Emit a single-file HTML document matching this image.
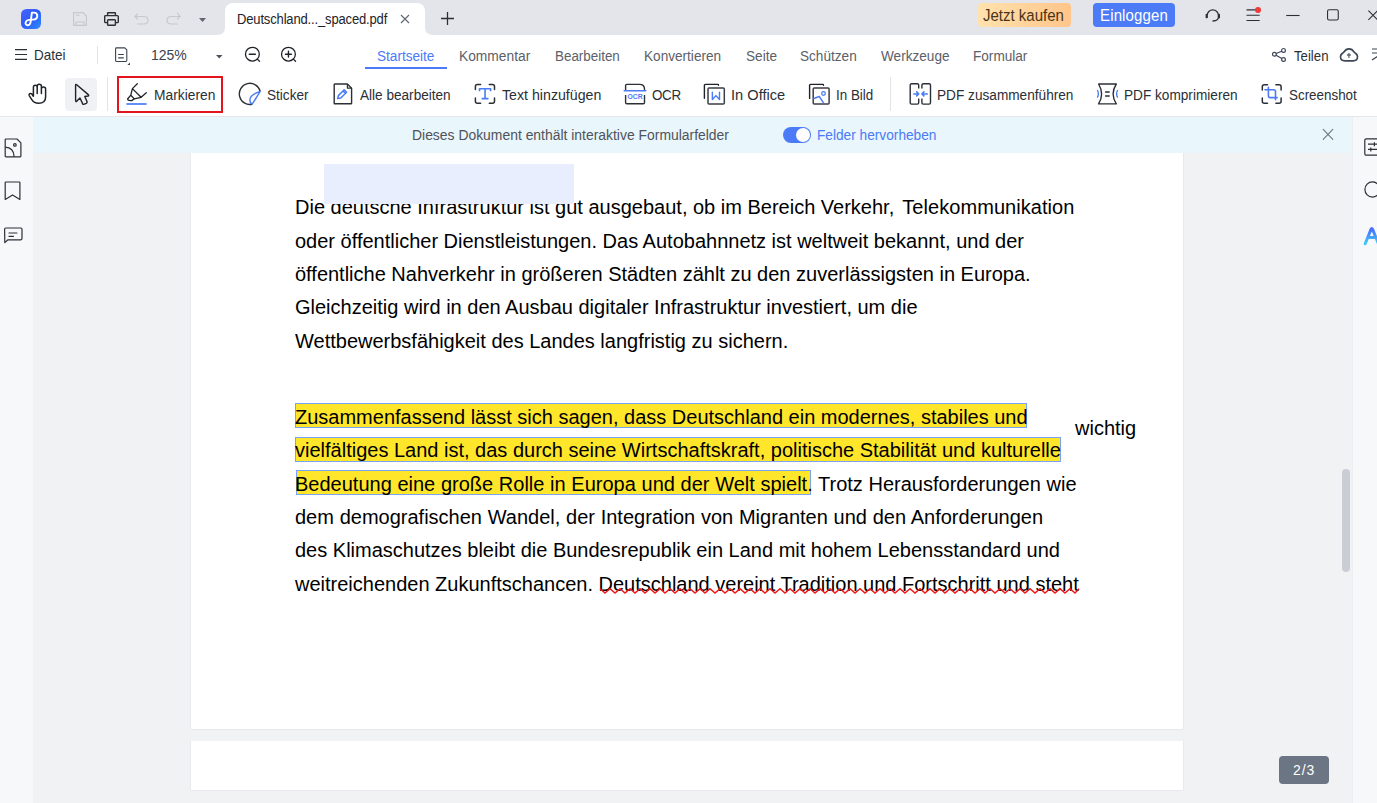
<!DOCTYPE html>
<html><head><meta charset="utf-8">
<style>
*{box-sizing:border-box;margin:0;padding:0}
html,body{width:1377px;height:803px;overflow:hidden}
body{position:relative;background:#F1F2F4;font-family:"Liberation Sans",sans-serif;color:#1F2329}
.a{position:absolute}
.t{position:absolute;white-space:nowrap;line-height:1}
svg{position:absolute;overflow:visible}
#title{left:0;top:0;width:1377px;height:35px;background:#E4E5EA}
#tool{left:0;top:35px;width:1377px;height:82px;background:#fff;border-bottom:1px solid #E6E7EB}
#lside{left:0;top:117px;width:33px;height:686px;background:#F7F8FA}
#rside{left:1352px;top:117px;width:25px;height:686px;background:#F7F8FA;border-left:1px solid #EDEEF1}
#info{left:33px;top:117px;width:1319px;height:36px;background:#E9F6FC}
.page{background:#fff;box-shadow:-1px 0 0 #E8E9EC,1px 0 0 #E8E9EC,0 1px 0 #E8E9EC}
.doc{position:absolute;white-space:nowrap;font-size:20px;line-height:20px;color:#000;font-family:"Liberation Sans",sans-serif}
.hl{position:absolute;background:#FFE62B;border:1px solid #79A2F2}
.ui{font-size:14px;color:#2B2F36}
.tab{font-size:14px;color:#5C6068}
</style></head>
<body>
<div id="title" class="a"></div>
<div id="tool" class="a"></div>
<div id="lside" class="a"></div>
<div id="rside" class="a"></div>
<div id="info" class="a"></div>

<!-- title bar content -->
<svg style="left:21px;top:9px" width="20" height="20" viewBox="0 0 20 20">
<defs><linearGradient id="lg" x1="0" y1="0" x2="1" y2="1"><stop offset="0" stop-color="#4A63FF"/><stop offset="0.5" stop-color="#2D5BF7"/><stop offset="1" stop-color="#2E8DFF"/></linearGradient></defs>
<rect x="0" y="0" width="20" height="20" rx="5.5" fill="url(#lg)"/>
<path d="M10.9 3.6 L9.7 12.6 Q9.2 16.2 6.4 16.2 Q4.4 16.1 4.6 13.8 Q5 10.9 9.2 10.6 L12.2 10.5 Q16.3 10.2 16.3 6.9 Q16.3 3.6 12.8 3.6 Z" fill="none" stroke="#fff" stroke-width="1.9" stroke-linejoin="round" stroke-linecap="round"/>
</svg>
<!-- save (disabled) -->
<svg style="left:73px;top:12px" width="14" height="14" viewBox="0 0 14 14" fill="none" stroke="#C5C8CE" stroke-width="1.2">
<path d="M0.6 0.6 H10 L13.4 4 V13.4 H0.6 Z"/><path d="M3 10 H11 V13.4 M3 13.4 V10"/><path d="M3 3.2 H6.5"/>
</svg>
<!-- print -->
<svg style="left:104px;top:12px" width="15" height="14" viewBox="0 0 15 14" fill="none" stroke="#2B2F36" stroke-width="1.4" stroke-linejoin="round">
<path d="M3.6 3.6 V1.2 Q3.6 0.7 4.1 0.7 H10.9 Q11.4 0.7 11.4 1.2 V3.6"/>
<path d="M3.4 10.6 H1.6 Q0.7 10.6 0.7 9.7 V4.6 Q0.7 3.6 1.7 3.6 H13.3 Q14.3 3.6 14.3 4.6 V9.7 Q14.3 10.6 13.4 10.6 H11.6"/>
<rect x="3.6" y="7.8" width="7.8" height="5.5" rx="0.8"/>
</svg>
<!-- undo -->
<svg style="left:134px;top:13px" width="15" height="12" viewBox="0 0 15 12" fill="none" stroke="#C5C8CE" stroke-width="1.2" stroke-linecap="round">
<path d="M1 3.5 H9.5 Q14 3.5 14 7.2 Q14 11 9.5 11 H3.5"/><path d="M3.5 1 L1 3.5 L3.5 6"/>
</svg>
<!-- redo -->
<svg style="left:166px;top:12px" width="15" height="13" viewBox="0 0 15 13" fill="none" stroke="#C5C8CE" stroke-width="1.2" stroke-linecap="round">
<path d="M14 4.5 H5.5 Q1 4.5 1 8.2 Q1 12 5.5 12 H11.5"/><path d="M11.5 1 L14 4.5 L11.5 7"/>
</svg>
<svg style="left:199px;top:18px" width="7" height="4" viewBox="0 0 7 4"><path d="M0 0 H7 L3.5 4 Z" fill="#5F6672"/></svg>

<!-- tab -->
<div class="a" style="left:225px;top:3px;width:200px;height:32px;background:#fff;border-radius:8px 8px 0 0"></div>
<svg style="left:217px;top:27px" width="8" height="8" viewBox="0 0 8 8"><path d="M8 0 V8 H0 Q8 8 8 0 Z" fill="#fff"/></svg>
<svg style="left:425px;top:27px" width="8" height="8" viewBox="0 0 8 8"><path d="M0 0 V8 H8 Q0 8 0 0 Z" fill="#fff"/></svg>
<div class="t" style="left:237px;top:12.50px;font-size:13.77px;color:#1F2329;letter-spacing:-0.159px;transform:scaleX(0.9442);transform-origin:0 0">Deutschland..._spaced.pdf</div>
<svg style="left:400px;top:14px" width="10" height="10" viewBox="0 0 10 10" stroke="#5F6672" stroke-width="1.1"><path d="M1 1 L9 9 M9 1 L1 9"/></svg>
<svg style="left:441px;top:12px" width="13" height="13" viewBox="0 0 13 13" stroke="#2B2F36" stroke-width="1.3"><path d="M6.5 0 V13 M0 6.5 H13"/></svg>

<!-- right title buttons -->
<div class="a" style="left:978px;top:3px;width:93px;height:24px;border-radius:4px;background:linear-gradient(90deg,#FFE2AE,#FFC58A)"></div>
<div class="t" style="left:983px;top:7.13px;font-size:16.09px;color:#4A3415;letter-spacing:0.000px;transform:scaleX(0.9324);transform-origin:0 0">Jetzt kaufen</div>
<div class="a" style="left:1093px;top:3px;width:82px;height:24px;border-radius:4px;background:#4B7BF6"></div>
<div class="t" style="left:1100px;top:7.13px;font-size:16.09px;color:#fff;letter-spacing:0.161px;transform:scaleX(0.9324);transform-origin:0 0">Einloggen</div>
<!-- headset -->
<svg style="left:1205px;top:8px" width="15" height="15" viewBox="0 0 15 15" fill="none" stroke="#2B2F36" stroke-width="1.3" stroke-linecap="round">
<path d="M2.2 9.4 V7.4 A5.6 5.6 0 0 1 13.4 7.4 V9.2 Q13.4 12.6 8 13"/><path d="M1.4 6.6 V9.6 M14.2 6.6 V9.6" stroke-width="1.6"/>
</svg>
<!-- menu w/ red dot -->
<svg style="left:1246px;top:8px" width="15" height="14" viewBox="0 0 15 14" stroke="#2B2F36" stroke-width="1.1">
<path d="M0.5 1.9 H9 M0.5 7.2 H13.7 M0.5 12.5 H13.7"/>
</svg>
<div class="a" style="left:1255.2px;top:7px;width:5.8px;height:5.8px;border-radius:50%;background:#EF3B36"></div>
<svg style="left:1286px;top:14px" width="14" height="3" viewBox="0 0 14 3" stroke="#2B2F36" stroke-width="1.1"><path d="M0.2 1.5 H13.6"/></svg>
<svg style="left:1327px;top:9px" width="12" height="12" viewBox="0 0 12 12" fill="none" stroke="#2B2F36" stroke-width="1.1"><rect x="0.55" y="0.7" width="10.7" height="10.3" rx="1.5"/></svg>
<svg style="left:1368px;top:10px" width="10" height="10" viewBox="0 0 10 10" stroke="#2B2F36" stroke-width="1.1"><path d="M0.4 0.6 L9.6 9.8 M9.6 0.6 L0.4 9.8"/></svg>

<!-- row 2 -->
<svg style="left:15px;top:49px" width="12" height="11" viewBox="0 0 12 11" stroke="#2B2F36" stroke-width="1.1"><path d="M0 0.6 H12 M0 5.5 H12 M0 10.4 H12"/></svg>
<div class="t ui" style="left:34px;top:47.83px;font-size:14.20px;transform:scaleX(0.9505);transform-origin:0 0">Datei</div>
<div class="a" style="left:97px;top:46px;width:1px;height:18px;background:#E3E4E8"></div>
<svg style="left:115px;top:47px" width="16" height="19" viewBox="0 0 16 19" fill="none" stroke="#3A4250" stroke-width="1.1" stroke-linejoin="round">
<path d="M0.6 1.8 Q0.6 0.9 1.5 0.9 H9.8 L11.8 2.9 V13.6 Q11.8 14.5 10.9 14.5 H1.5 Q0.6 14.5 0.6 13.6 Z"/><path d="M3.2 7.5 H8.8 M3.2 10.8 H8.8" stroke-width="1.2"/>
<path d="M12.4 17.9 L15 15.4 V17.9 Z" fill="#3A4250" stroke="none"/>
</svg>
<div class="t ui" style="left:151px;top:47.83px;font-size:14.20px;color:#3A4250;transform:scaleX(0.9857);transform-origin:0 0">125%</div>
<svg style="left:215.5px;top:55px" width="7" height="4" viewBox="0 0 7 4"><path d="M0 0 H6.5 L3.25 3.4 Z" fill="#4A5260"/></svg>
<svg style="left:244px;top:46px" width="18" height="18" viewBox="0 0 18 18" fill="none" stroke="#1F2329" stroke-width="1.3" stroke-linecap="round">
<circle cx="8.4" cy="8.2" r="6.9"/><path d="M13.3 13.1 L15.5 15.3"/><path d="M5.3 8.2 H11.4" stroke-width="1.4"/>
</svg>
<svg style="left:280px;top:46px" width="18" height="18" viewBox="0 0 18 18" fill="none" stroke="#1F2329" stroke-width="1.3" stroke-linecap="round">
<circle cx="8.45" cy="8.2" r="6.9"/><path d="M13.35 13.1 L15.55 15.3"/><path d="M5.5 8.2 H11.4 M8.45 5.3 V11.1" stroke-width="1.4"/>
</svg>
<div class="t tab" style="left:377px;top:48.70px;font-size:14.35px;color:#4B7BF6;transform:scaleX(0.9479);transform-origin:0 0">Startseite</div>
<div class="a" style="left:365px;top:67px;width:82px;height:2px;background:#4B7BF6"></div>
<div class="t tab" style="left:459px;top:48.70px;font-size:14.35px;transform:scaleX(0.9618);transform-origin:0 0">Kommentar</div>
<div class="t tab" style="left:555px;top:48.70px;font-size:14.35px;transform:scaleX(0.9339);transform-origin:0 0">Bearbeiten</div>
<div class="t tab" style="left:644px;top:48.70px;font-size:14.35px;transform:scaleX(0.9479);transform-origin:0 0">Konvertieren</div>
<div class="t tab" style="left:746px;top:48.70px;font-size:14.35px;transform:scaleX(0.9479);transform-origin:0 0">Seite</div>
<div class="t tab" style="left:800px;top:48.70px;font-size:14.35px;transform:scaleX(0.9479);transform-origin:0 0">Schützen</div>
<div class="t tab" style="left:881px;top:48.70px;font-size:14.35px;transform:scaleX(0.9479);transform-origin:0 0">Werkzeuge</div>
<div class="t tab" style="left:973px;top:48.70px;font-size:14.35px;transform:scaleX(0.9479);transform-origin:0 0">Formular</div>
<svg style="left:1272px;top:48px" width="14" height="14" viewBox="0 0 14 14" fill="none" stroke="#3D4758" stroke-width="1.2">
<circle cx="11.5" cy="2.4" r="1.9"/><circle cx="2.4" cy="6.3" r="1.9"/><circle cx="11.5" cy="11.5" r="1.9"/><path d="M4.1 5.5 L9.7 3.2 M4.1 7.2 L9.8 10.5"/>
</svg>
<div class="t ui" style="left:1294px;top:48.68px;font-size:14.49px;transform:scaleX(0.9108);transform-origin:0 0">Teilen</div>
<svg style="left:1340px;top:48px" width="19" height="14" viewBox="0 0 19 14" fill="none" stroke="#3D4758" stroke-width="1.6" stroke-linejoin="round">
<path d="M5 12.9 H13 Q17.5 12.9 17.5 8.8 Q17.5 6.2 14.8 4.7 L13.9 3.9 C12.6 1.6 11 0.9 9 0.9 C7 0.9 5.4 1.6 4.1 3.9 L3.2 4.7 Q0.5 6.2 0.5 8.8 Q0.5 12.9 5 12.9 Z"/>
<path d="M8.9 10 V5.8 M7.1 7.5 L8.9 5.7 L10.7 7.5" stroke="#6A7383" stroke-width="1.3"/>
</svg>
<svg style="left:1372px;top:48px" width="8" height="14" viewBox="0 0 8 14" fill="none" stroke="#3D4650" stroke-width="1.2"><path d="M0 1 H8 M0 5 H8 M0 12 L6 8"/></svg>

<!-- row 3 -->
<svg style="left:28px;top:84px" width="19" height="20" viewBox="0 0 19 20" fill="none" stroke="#1F2329" stroke-width="1.5" stroke-linecap="round" stroke-linejoin="round">
<path d="M5.4 12.2 V3.4 Q5.4 1.3 7.3 1.3 Q9.2 1.3 9.2 3.4 V9.6 M9.2 3.4 V2.2 Q9.2 0.3 11.3 0.3 Q13.4 0.3 13.4 2.2 V9.6 M13.4 4.8 Q13.6 3 15.5 3 Q17.6 3 17.6 5 V13 Q17.6 19.3 10.6 19.3 Q6 19.3 3.8 15.6 L1.2 11.6 Q0.7 10.4 1.7 9.7 Q2.8 9.1 3.8 10 L5.4 12.2"/>
</svg>
<div class="a" style="left:65px;top:78px;width:32px;height:33px;border-radius:4px;background:#F0F1F4"></div>
<svg style="left:74px;top:83px" width="16" height="22" viewBox="0 0 16 22" fill="none" stroke="#1F2329" stroke-width="1.4" stroke-linejoin="round">
<path d="M1.6 2.3 Q1.6 0.9 2.7 1.7 L14.3 11.6 Q15.3 12.7 13.9 13 L10.8 13.5 L13 18.6 Q13.4 19.7 12.3 20.3 L10.3 21.2 Q9.1 21.7 8.6 20.6 L6 15 L2.9 18.1 Q1.6 19.2 1.6 17.6 Z"/>
</svg>
<div class="a" style="left:107px;top:77px;width:1px;height:34px;background:#E3E4E8"></div>
<div class="a" style="left:117px;top:76px;width:106px;height:37px;border:2px solid #E4141C"></div>
<svg style="left:126px;top:82px" width="22" height="23" viewBox="0 0 22 23" fill="none" stroke="#1F2329" stroke-width="1.3" stroke-linejoin="round" stroke-linecap="round">
<path d="M11.3 1.8 L6.4 6.6 L15.1 15.3 L20.3 10.7 M6.4 6.6 L4.8 13.2 L8.3 16.9 L15.1 15.3 M4.8 13.2 L1.6 17.0 Q1.8 18.9 5.6 18.6 L8.3 16.9"/>
<path d="M0.4 22 H20.6" stroke="#5B8BF8" stroke-width="1.9" stroke-linecap="butt"/>
</svg>
<div class="t ui" style="left:154px;top:87.58px;font-size:14.49px;transform:scaleX(0.9522);transform-origin:0 0">Markieren</div>
<svg style="left:239px;top:83px" width="22" height="22" viewBox="0 0 22 22" fill="none" stroke-width="1.4" stroke-linejoin="round">
<path d="M13.2 21.3 A10.6 10.6 0 1 1 21.2 8.3" stroke="#2B2F36"/>
<path d="M21.2 8.3 L13.2 21.2 C12 20.6 10.9 19 10.9 17 C10.9 13.6 15 10.5 21.2 8.3 Z" stroke="#4B7BF6"/>
</svg>
<div class="t ui" style="left:267px;top:87.58px;font-size:14.49px;transform:scaleX(0.9384);transform-origin:0 0">Sticker</div>
<svg style="left:333px;top:83px" width="20" height="22" viewBox="0 0 20 22" fill="none" stroke-width="1.4" stroke-linejoin="round">
<path d="M1.2 1.6 Q1.2 1 1.8 1 H14.4 L18.6 5.2 V20.2 Q18.6 20.8 18 20.8 H1.8 Q1.2 20.8 1.2 20.2 Z" stroke="#2B2F36"/>
<path d="M14.4 1 V5.2 H18.6" stroke="#2B2F36" stroke-width="1.2"/>
<path d="M4.6 15.6 L5.4 12.6 L11.2 6.8 L13.6 9.2 L7.8 15 Z M10 8 L12.4 10.4" stroke="#4B7BF6" stroke-width="1.5"/>
</svg>
<div class="t ui" style="left:360px;top:87.58px;font-size:14.49px;transform:scaleX(0.9384);transform-origin:0 0">Alle bearbeiten</div>
<svg style="left:474px;top:83px" width="22" height="22" viewBox="0 0 22 22" fill="none" stroke-width="1.5" stroke-linecap="round" stroke-linejoin="round">
<path d="M1.4 6.6 V3.4 Q1.4 1.4 3.4 1.4 H6.6 M15.3 1.4 H18.5 Q20.5 1.4 20.5 3.4 V6.6 M20.5 15.1 V18.3 Q20.5 20.3 18.5 20.3 H15.3 M6.6 20.3 H3.4 Q1.4 20.3 1.4 18.3 V15.1" stroke="#2B2F36"/>
<path d="M5.5 8.2 V5.7 H16.6 V8.2 M11.05 5.7 V15.5 M7.6 15.6 H14.5" stroke="#4B7BF6" stroke-width="1.6" stroke-linecap="butt"/>
</svg>
<div class="t ui" style="left:502px;top:87.58px;font-size:14.49px;transform:scaleX(0.9792);transform-origin:0 0">Text hinzufügen</div>
<svg style="left:624px;top:83px" width="23" height="22" viewBox="0 0 23 22" fill="none" stroke-width="1.4" stroke-linejoin="round">
<path d="M1.6 7.4 V2.6 Q1.6 1.4 2.8 1.4 H15.4 Q20.5 1.4 20.5 6 V7.4" stroke="#2B2F36"/>
<path d="M1.6 12 V19.6 Q1.6 20.8 2.8 20.8 H19.3 Q20.5 20.8 20.5 19.6 V12" stroke="#2B2F36"/>
<path d="M0.2 7.8 H21.8" stroke="#4B7BF6" stroke-width="1.5" stroke-linecap="round"/>
<text x="11" y="15.9" font-family="Liberation Sans" font-weight="bold" font-size="6.8" text-anchor="middle" fill="#4B7BF6" stroke="none">OCR</text>
</svg>
<div class="t ui" style="left:652px;top:87.58px;font-size:14.49px;letter-spacing:-0.324px;transform:scaleX(0.9246);transform-origin:0 0">OCR</div>
<svg style="left:703px;top:83px" width="22" height="22" viewBox="0 0 22 22" fill="none" stroke-width="1.4" stroke-linejoin="round" stroke-linecap="round">
<path d="M1.4 15.2 V2.4 Q1.4 1.4 2.4 1.4 H15.2 Q15.5 1.4 15.5 2.3" stroke="#1F2329"/>
<rect x="5" y="5" width="16.3" height="15.9" rx="1" stroke="#3A3F47" stroke-width="1.5"/>
<path d="M9.35 9.1 V16.5 L12.9 12.6 L16.5 16.5 V9.1" stroke="#4B7BF6" stroke-width="1.4"/>
</svg>
<div class="t ui" style="left:731px;top:87.58px;font-size:14.49px;transform:scaleX(1.0094);transform-origin:0 0">In Office</div>
<svg style="left:808px;top:83px" width="22" height="22" viewBox="0 0 22 22" fill="none" stroke-width="1.4" stroke-linejoin="round" stroke-linecap="round">
<path d="M1.6 15.4 V2.4 Q1.6 1.4 2.6 1.4 H15.2 Q15.5 1.4 15.5 2.3" stroke="#1F2329"/>
<rect x="5.2" y="5" width="15.9" height="15.9" rx="1" stroke="#3A3F47" stroke-width="1.5"/>
<path d="M5.8 15.5 L11.3 13.5 L15.5 19.9" stroke="#4B7BF6" stroke-width="1.4"/>
<circle cx="15.5" cy="10.5" r="1.8" stroke="#4B7BF6" stroke-width="1.3"/>
</svg>
<div class="t ui" style="left:836px;top:87.58px;font-size:14.49px;transform:scaleX(0.9246);transform-origin:0 0">In Bild</div>
<div class="a" style="left:890px;top:77px;width:1px;height:34px;background:#E3E4E8"></div>
<svg style="left:909px;top:83px" width="23" height="22" viewBox="0 0 23 22" fill="none" stroke-width="1.4" stroke-linejoin="round">
<path d="M9.7 5.6 V2.2 Q9.7 0.8 8.3 0.8 H2.6 Q1.2 0.8 1.2 2.2 V19.7 Q1.2 21.1 2.6 21.1 H8.3 Q9.7 21.1 9.7 19.7 V15.5 M12.9 5.6 V2.2 Q12.9 0.8 14.3 0.8 H20.1 Q21.5 0.8 21.5 2.2 V19.7 Q21.5 21.1 20.1 21.1 H14.3 Q12.9 21.1 12.9 19.7 V15.5" stroke="#2B2F36"/>
<path d="M4.2 10.9 H9 M7.2 8.4 L9.7 10.9 L7.2 13.4 M18.9 10.9 H13.6 M15.4 8.4 L12.9 10.9 L15.4 13.4" stroke="#4B7BF6" stroke-width="1.5"/>
</svg>
<div class="t ui" style="left:937px;top:87.58px;font-size:14.49px;transform:scaleX(0.9417);transform-origin:0 0">PDF zusammenführen</div>
<svg style="left:1096px;top:83px" width="23" height="22" viewBox="0 0 23 22" fill="none" stroke-width="1.4" stroke-linejoin="round">
<path d="M2.6 1 H20.3 Q17.1 6 17.1 11 Q17.1 16 20.3 20.9 H2.6 Q5.6 16 5.6 11 Q5.6 6 2.6 1 Z" stroke="#2B2F36"/>
<path d="M9.1 8.9 H13.7 M9.1 12.9 H13.7" stroke="#2B2F36" stroke-width="1.5"/>
<path d="M1.3 7 Q3.5 10.9 1.3 14.7 M21.7 7 Q19.5 10.9 21.7 14.7" stroke="#4B7BF6" stroke-width="1.3"/>
</svg>
<div class="t ui" style="left:1124px;top:87.58px;font-size:14.49px;transform:scaleX(0.9408);transform-origin:0 0">PDF komprimieren</div>
<svg style="left:1261px;top:83px" width="22" height="22" viewBox="0 0 22 22" fill="none" stroke-width="1.5" stroke-linecap="round" stroke-linejoin="round">
<path d="M1.3 7 V3.8 Q1.3 1.8 3.3 1.8 H6.5 M14.9 1.8 H18.1 Q20.1 1.8 20.1 3.8 V7 M20.1 15.1 V18.3 Q20.1 20.3 18.1 20.3 H14.9 M6.5 20.3 H3.3 Q1.3 20.3 1.3 18.3 V15.1" stroke="#2B2F36"/>
<path d="M7.4 4.4 V12.8 Q7.4 14.6 9.2 14.6 H16.2 M4 6.8 H12.6 Q14.5 6.8 14.5 8.6 V16.8" stroke="#4B7BF6" stroke-width="1.6"/>
</svg>
<div class="t ui" style="left:1289px;top:87.58px;font-size:14.49px;transform:scaleX(0.9246);transform-origin:0 0">Screenshot</div>

<!-- info bar -->
<div class="t" style="left:412px;top:127.50px;font-size:14.35px;color:#4F535A;transform:scaleX(0.9697);transform-origin:0 0">Dieses Dokument enthält interaktive Formularfelder</div>
<div class="a" style="left:783px;top:127px;width:28px;height:16px;border-radius:8px;background:#4B7BF6"></div>
<div class="a" style="left:796px;top:128px;width:14px;height:14px;border-radius:50%;background:#fff"></div>
<div class="t" style="left:817px;top:127.50px;font-size:14.35px;color:#4B7BF6;transform:scaleX(0.9541);transform-origin:0 0">Felder hervorheben</div>
<svg style="left:1323px;top:129px" width="10" height="11" viewBox="0 0 10 11" stroke="#6E7783" stroke-width="1.1" stroke-linecap="round"><path d="M0.2 0.4 L9.8 10.4 M9.8 0.4 L0.2 10.4"/></svg>

<!-- left sidebar icons -->
<svg style="left:4px;top:138px" width="18" height="20" viewBox="0 0 18 20" fill="none" stroke="#2B2F36" stroke-width="1.2" stroke-linejoin="round">
<path d="M1.2 2 Q1.2 1 2.2 1 H13 L16.9 4.9 V17.9 Q16.9 18.9 15.9 18.9 H2.2 Q1.2 18.9 1.2 17.9 Z"/><path d="M1.2 9.2 Q9.8 9.6 10.2 18.9"/><circle cx="10.9" cy="6.9" r="1.3"/>
</svg>
<svg style="left:4px;top:181px" width="18" height="20" viewBox="0 0 18 20" fill="none" stroke="#2B2F36" stroke-width="1.2" stroke-linejoin="round">
<path d="M1.2 1.6 Q1.2 1 1.8 1 H15.3 Q15.9 1 15.9 1.6 V18.4 L8.55 13.9 L1.2 18.4 Z"/>
</svg>
<svg style="left:3px;top:227px" width="20" height="17" viewBox="0 0 20 17" fill="none" stroke="#2B2F36" stroke-width="1.2" stroke-linejoin="round" stroke-linecap="round">
<path d="M1.6 2.2 Q1.6 1 2.8 1 H17.8 Q19 1 19 2.2 V11.6 Q19 12.8 17.8 12.8 H5 L1.8 15.6 Z"/><path d="M6 6 H13.9 M6 9.3 H10.5"/>
</svg>
<!-- right sidebar icons -->
<svg style="left:1364px;top:138px" width="18" height="18" viewBox="0 0 18 18" fill="none" stroke="#2B2F36" stroke-width="1.2">
<rect x="0.8" y="0.8" width="16.4" height="16.4" rx="1.5"/><path d="M4 6.2 H14 M4 11.4 H14 M10.4 4.2 V8.2 M6.8 9.4 V13.4"/>
</svg>
<svg style="left:1364px;top:181.3px" width="18" height="18" viewBox="0 0 18 18" fill="none" stroke="#2B2F36" stroke-width="1.2"><circle cx="8.5" cy="8.5" r="7.6"/></svg>
<svg style="left:1363px;top:226px" width="20" height="20" viewBox="0 0 20 20">
<defs><linearGradient id="ag" x1="0" y1="0" x2="0" y2="1"><stop offset="0" stop-color="#4A6DFF"/><stop offset="1" stop-color="#3FCBF6"/></linearGradient></defs>
<path d="M2.2 17.8 L8 3.4 Q8.8 1.8 9.6 3.4 L15.4 17.8 M5.6 11.6 H12" fill="none" stroke="url(#ag)" stroke-width="3" stroke-linecap="round" stroke-linejoin="round"/>
</svg>

<!-- pages -->
<div class="a page" style="left:191px;top:153px;width:992px;height:576px"></div>
<div class="a page" style="left:191px;top:741px;width:992px;height:49px"></div>


<!-- document text page 1 -->
<div class="a" style="left:324px;top:164px;width:250px;height:40px;background:#E8EEFD;z-index:3"></div>
<div class="doc" style="left:295px;top:197.2px">Die deutsche Infrastruktur ist gut ausgebaut, ob im Bereich Verkehr, <span style="margin-left:2.5px;letter-spacing:0.06px">Telekommunikation</span></div>
<div class="doc" style="left:295px;top:230.5px">oder öffentlicher Dienstleistungen. Das Autobahnnetz ist weltweit bekannt, und der</div>
<div class="doc" style="left:295px;top:263.8px">öffentliche Nahverkehr in größeren Städten zählt zu den zuverlässigsten in Europa.</div>
<div class="doc" style="left:295px;top:297.2px">Gleichzeitig wird in den Ausbau digitaler Infrastruktur investiert, um die</div>
<div class="doc" style="left:295px;top:330.5px">Wettbewerbsfähigkeit des Landes langfristig zu sichern.</div>

<div class="hl" style="left:295px;top:403px;width:732px;height:25px"></div>
<div class="hl" style="left:295px;top:437px;width:766px;height:24.5px"></div>
<div class="hl" style="left:296px;top:470px;width:515px;height:25px"></div>
<div class="doc" style="left:295px;top:406.6px">Zusammenfassend lässt sich sagen, dass Deutschland ein modernes, stabiles und</div>
<div class="doc" style="left:1075px;top:417.8px">wichtig</div>
<div class="doc" style="left:295px;top:440.3px">vielfältiges Land ist, das durch seine Wirtschaftskraft, politische Stabilität und kulturelle</div>
<div class="doc" style="left:295px;top:473.7px;word-spacing:0.12px">Bedeutung eine große Rolle in Europa und der Welt spielt. Trotz Herausforderungen wie</div>
<div class="doc" style="left:295px;top:507.0px;word-spacing:0.18px">dem demografischen Wandel, der Integration von Migranten und den Anforderungen</div>
<div class="doc" style="left:295px;top:540.3px">des Klimaschutzes bleibt die Bundesrepublik ein Land mit hohem Lebensstandard und</div>
<div class="doc" style="left:295px;top:573.6px">weitreichenden Zukunftschancen. Deutschland vereint Tradition und Fortschritt und steht</div>
<svg style="left:600px;top:588px" width="480" height="6" viewBox="0 0 480 6" fill="none" stroke="#F01818" stroke-width="1.5" stroke-linejoin="miter"><path d="M0 0.8 L5 5 L10 0.8 L15 5 L20 0.8 L25 5 L30 0.8 L35 5 L40 0.8 L45 5 L50 0.8 L55 5 L60 0.8 L65 5 L70 0.8 L75 5 L80 0.8 L85 5 L90 0.8 L95 5 L100 0.8 L105 5 L110 0.8 L115 5 L120 0.8 L125 5 L130 0.8 L135 5 L140 0.8 L145 5 L150 0.8 L155 5 L160 0.8 L165 5 L170 0.8 L175 5 L180 0.8 L185 5 L190 0.8 L195 5 L200 0.8 L205 5 L210 0.8 L215 5 L220 0.8 L225 5 L230 0.8 L235 5 L240 0.8 L245 5 L250 0.8 L255 5 L260 0.8 L265 5 L270 0.8 L275 5 L280 0.8 L285 5 L290 0.8 L295 5 L300 0.8 L305 5 L310 0.8 L315 5 L320 0.8 L325 5 L330 0.8 L335 5 L340 0.8 L345 5 L350 0.8 L355 5 L360 0.8 L365 5 L370 0.8 L375 5 L380 0.8 L385 5 L390 0.8 L395 5 L400 0.8 L405 5 L410 0.8 L415 5 L420 0.8 L425 5 L430 0.8 L435 5 L440 0.8 L445 5 L450 0.8 L455 5 L460 0.8 L465 5 L470 0.8 L475 5 L479 0.8"/></svg>

<!-- scrollbar & badge -->
<div class="a" style="left:1342px;top:469px;width:8px;height:103px;border-radius:4px;background:#C9CDD4"></div>
<div class="a" style="left:1279px;top:756px;width:50px;height:28px;border-radius:4px;background:#6C7583"></div>
<div class="t" style="left:1293px;top:762.51px;font-size:14.93px;color:#fff;letter-spacing:0.960px;transform:scaleX(0.9379);transform-origin:0 0">2/3</div>
</body></html>
